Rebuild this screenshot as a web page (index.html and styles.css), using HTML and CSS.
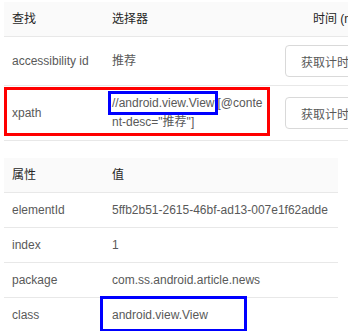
FILE: index.html
```html
<!DOCTYPE html>
<html>
<head>
<meta charset="utf-8">
<link rel="stylesheet" href="styles.css">
</head>
<body>
<div class="page">
  <table class="tbl tbl-find">
    <colgroup><col class="c1"><col class="c2"><col class="c3"></colgroup>
    <thead>
      <tr><th>查找</th><th>选择器</th><th class="time-h">时间 (ms)</th></tr>
    </thead>
    <tbody>
      <tr class="r-btn">
        <td>accessibility id</td>
        <td>推荐</td>
        <td><button class="btn">获取计时</button></td>
      </tr>
      <tr class="r-btn r-mark">
        <td class="mark-cell">xpath<span class="red-box"></span></td>
        <td class="sel"><span class="hl">//android.view.View</span>[@content-desc="推荐"]</td>
        <td><button class="btn">获取计时</button></td>
      </tr>
    </tbody>
  </table>

  <table class="tbl tbl-attr">
    <colgroup><col class="c1"><col class="c2w"></colgroup>
    <thead>
      <tr><th>属性</th><th>值</th></tr>
    </thead>
    <tbody>
      <tr><td>elementId</td><td>5ffb2b51-2615-46bf-ad13-007e1f62adde</td></tr>
      <tr><td>index</td><td>1</td></tr>
      <tr><td>package</td><td>com.ss.android.article.news</td></tr>
      <tr><td>class</td><td class="cls"><span class="blue-box2"></span>android.view.View</td></tr>
    </tbody>
  </table>
</div>
</body>
</html>
```
FILE: styles.css
```css
html, body {
  margin: 0;
  padding: 0;
  background: #fff;
  overflow: hidden;
}
body {
  width: 348px;
  height: 331px;
  font-family: "Liberation Sans", "Noto Sans CJK SC", sans-serif;
  font-size: 12px;
  color: #595959;
}
.page {
  padding: 2px 0 0 4px;
}
.tbl {
  border-collapse: collapse;
  table-layout: fixed;
}
.tbl th, .tbl td {
  text-align: left;
  vertical-align: middle;
  padding: 8px;
  line-height: 19px;
  border-bottom: 1px solid #e8e8e8;
}
.tbl th {
  background: #fafafa;
  color: #262626;
  font-weight: normal;
  height: 18px;
  line-height: 18px;
}
.tbl-find {
  width: 420px;
}
.c1 { width: 100px; }
.c2 { width: 173px; }
.c3 { width: 147px; }
.c2w { width: 234px; }
.time-h {
  padding-left: 36px !important;
}
.r-btn td {
  height: 31px;
}
.btn {
  height: 32px;
  padding: 0 15px;
  border: 1px solid #d9d9d9;
  border-radius: 4px;
  background: #fff;
  color: #595959;
  font-family: "Liberation Sans", "Noto Sans CJK SC", sans-serif;
  font-size: 12px;
  white-space: nowrap;
  display: block;
}
.mark-cell, .cls {
  position: relative;
}
.sel {
  word-break: break-all;
  padding-right: 13px !important;
}
.hl {
  position: relative;
  margin-right: 3px;
}
.hl::after {
  content: "";
  position: absolute;
  left: -4px;
  right: -3px;
  top: -5px;
  bottom: -5px;
  border: 3px solid #0000ff;
}
.red-box {
  position: absolute;
  left: 0;
  top: 1px;
  width: 260px;
  height: 43px;
  border: 3px solid #ff0000;
  pointer-events: none;
}
.tbl-attr {
  width: 334px;
  margin-top: 17px;
}
.tbl-attr td {
  line-height: 18px;
}
.blue-box2 {
  position: absolute;
  left: -4px;
  top: -2px;
  width: 141px;
  height: 30px;
  border: 3px solid #0000ff;
}
```
